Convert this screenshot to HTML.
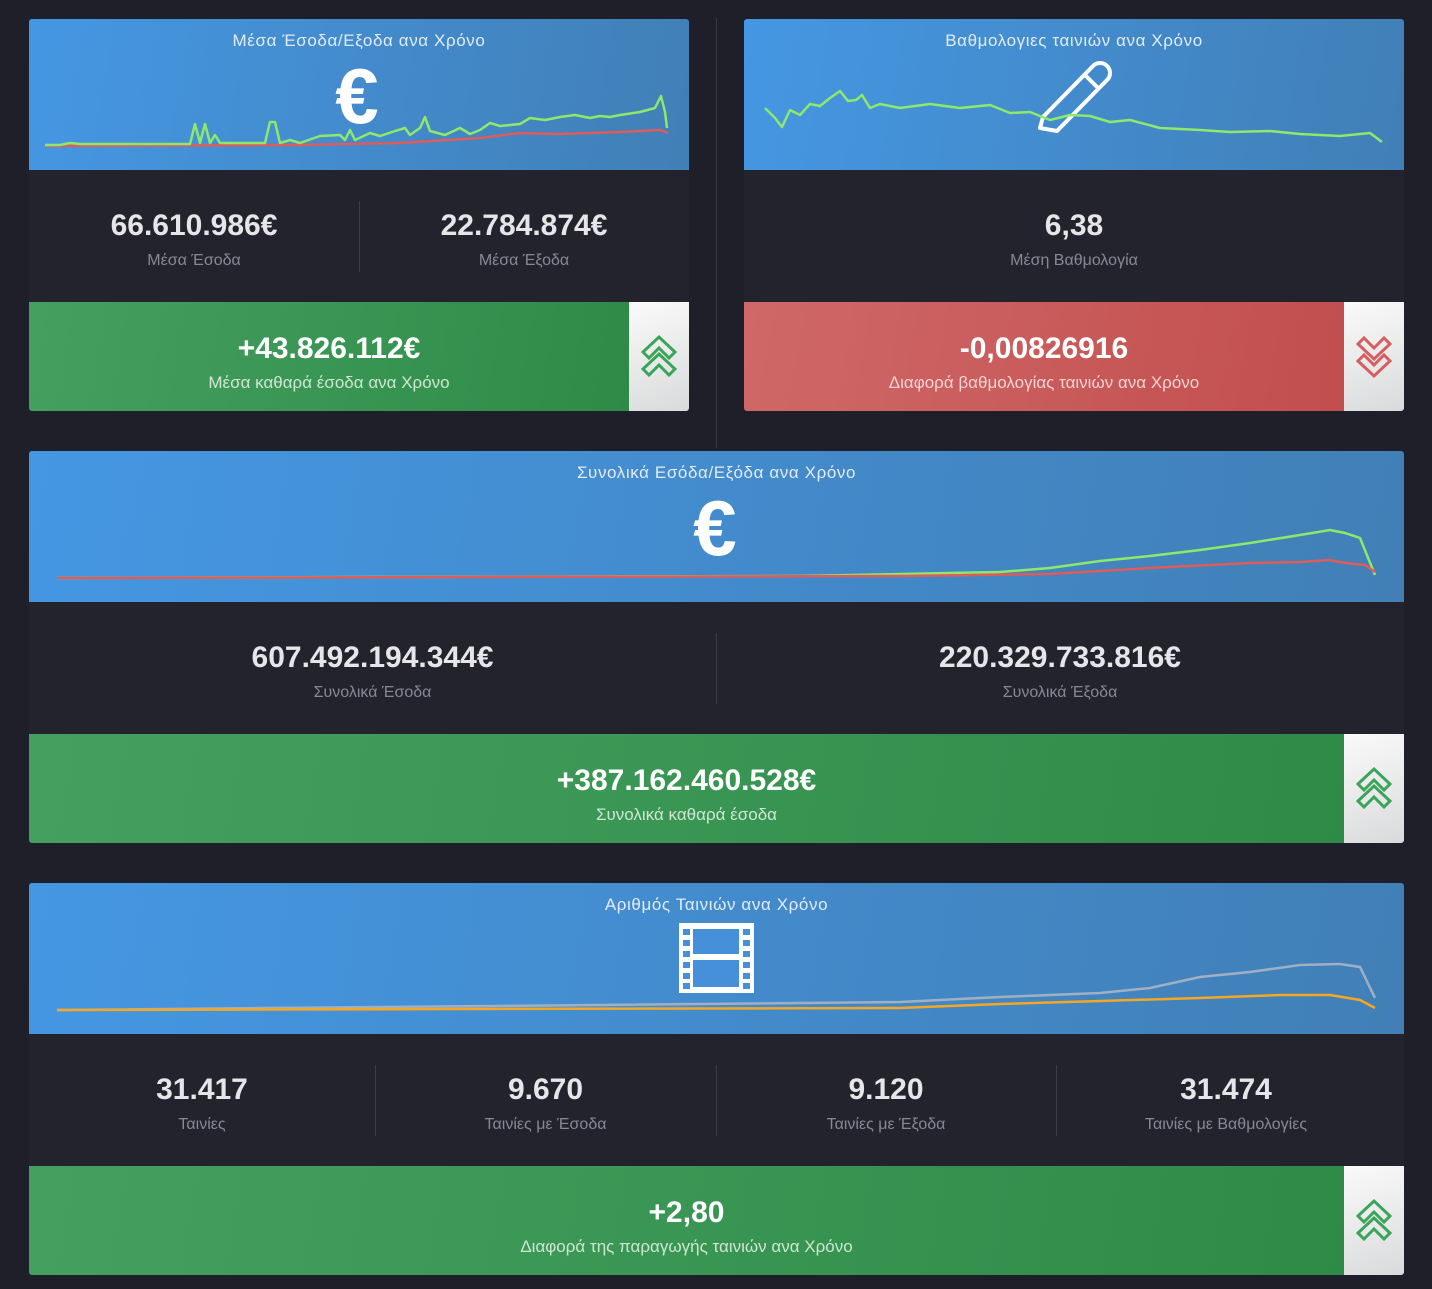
<!DOCTYPE html>
<html><head><meta charset="utf-8"><style>
*{margin:0;padding:0;box-sizing:border-box}
body{width:1432px;height:1289px;background:#1f1f29;font-family:"Liberation Sans","DejaVu Sans",sans-serif;position:relative;overflow:hidden}
.card{position:absolute;border-radius:3px;overflow:hidden;background:#23232e}
.hd{position:absolute;left:0;top:0;right:0;height:151px;background:linear-gradient(100deg,#4597e3,#417fb6)}
.hd .t{position:absolute;left:0;right:0;top:12px;text-align:center;color:#e3ebf5;font-size:17px;letter-spacing:.6px}
.hd svg{position:absolute;left:0;top:0}
.st{position:absolute;top:151px;height:132px;left:0;right:0}
.sc{position:absolute;top:0;height:132px;text-align:center}
.n{position:absolute;left:0;right:0;top:39px;font-size:30px;font-weight:bold;color:#e6e6e8;letter-spacing:0}
.l{position:absolute;left:0;right:0;top:82px;font-size:16px;color:#868995}
.dv{position:absolute;top:31px;width:1px;height:71px;background:#3b3c48}
.bt{position:absolute;top:283px;left:0;height:109px;text-align:center}
.bt .n{top:30px;color:#fff}
.bt .l{top:71px;font-size:17px;color:#cfe6d4}
.g{background:linear-gradient(100deg,#45a05f,#2e8b47)}
.r{background:linear-gradient(100deg,#d06868,#c24e4e)}
.r .l{color:#f3d3d3}
.ib{position:absolute;top:283px;right:0;width:60px;height:109px;background:linear-gradient(160deg,#fafafa,#d9dadb)}
.ib svg{position:absolute;left:12px;top:32px}
</style></head><body>
<div style="position:absolute;left:716px;top:18px;width:1px;height:430px;background:#3a3b46"></div>

<!-- card1 -->
<div class="card" style="left:29px;top:19px;width:660px;height:392px">
 <div class="hd"><div class="t">Μέσα Έσοδα/Εξοδα ανα Χρόνο</div>
 <svg width="660" height="151"><text x="328" y="104" text-anchor="middle" fill="#fff" font-size="78" font-weight="bold" font-family="Liberation Sans">€</text>
 <polyline fill="none" stroke="#de5c5a" stroke-width="2.5" points="16,127 271,126 371,124 451,119 491,114 531,115 591,113 631,111 639,114"/>
 <polyline fill="none" stroke="#8ee86a" stroke-width="2.5" stroke-linejoin="round" points="16,126 31,126 41,124 51,125 161,125 166,105 171,124 176,105 181,124 186,116 191,124 236,124 241,103 246,103 251,124 261,121 271,124 291,117 311,116 316,121 321,111 326,121 341,114 351,117 366,112 376,109 381,116 391,109 396,98 401,112 416,116 431,109 441,115 451,111 461,104 471,107 481,106 491,105 501,99 516,101 531,98 546,96 561,99 571,97 581,98 591,96 611,93 626,89 632,77 636,93 638,109"/></svg></div>
 <div class="st"><div class="sc" style="left:0;width:330px"><div class="n">66.610.986€</div><div class="l">Μέσα Έσοδα</div></div>
 <div class="dv" style="left:330px"></div>
 <div class="sc" style="left:330px;width:330px"><div class="n">22.784.874€</div><div class="l">Μέσα Έξοδα</div></div></div>
 <div class="bt g" style="width:600px"><div class="n">+43.826.112€</div><div class="l">Μέσα καθαρά έσοδα ανα Χρόνο</div></div>
 <div class="ib"><svg width="36" height="46"><g fill="none" stroke="#3aa559" stroke-width="3"><polygon points="2,18 18,3 34,18 28,24 18,14 8,24"/><polygon points="2,35 18,20 34,35 28,41 18,31 8,41"/></g></svg></div>
</div>

<!-- card2 -->
<div class="card" style="left:744px;top:19px;width:660px;height:392px">
 <div class="hd"><div class="t">Βαθμολογιες ταινιών ανα Χρόνο</div>
 <svg width="660" height="151">
 <g fill="none" stroke="#fff" stroke-width="4" stroke-linejoin="round"><path d="M299,98 L350,46 A10,10 0 0 1 364,60 L313,112 L296,109 Z"/><line x1="341" y1="56" x2="354" y2="69"/></g>
 <polyline fill="none" stroke="#8ee86a" stroke-width="2.5" stroke-linejoin="round" points="21,89 31,99 38,108 46,91 56,96 66,85 76,87 86,79 96,72 104,82 112,81 118,76 126,89 136,85 156,89 186,85 216,89 246,86 266,94 286,93 306,101 326,96 346,97 366,103 386,101 416,109 456,111 486,113 526,112 556,115 596,117 626,114 638,123"/></svg></div>
 <div class="st"><div class="sc" style="left:0;width:660px"><div class="n">6,38</div><div class="l">Μέση Βαθμολογία</div></div></div>
 <div class="bt r" style="width:600px"><div class="n">-0,00826916</div><div class="l">Διαφορά βαθμολογίας ταινιών ανα Χρόνο</div></div>
 <div class="ib"><svg width="36" height="46"><g fill="none" stroke="#d65e5e" stroke-width="3"><polygon points="2,10 18,25 34,10 28,4 18,14 8,4"/><polygon points="2,27 18,42 34,27 28,21 18,31 8,21"/></g></svg></div>
</div>

<!-- card3 -->
<div class="card" style="left:29px;top:451px;width:1375px;height:392px">
 <div class="hd"><div class="t">Συνολικά Εσόδα/Εξόδα ανα Χρόνο</div>
 <svg width="1375" height="151"><text x="686" y="104" text-anchor="middle" fill="#fff" font-size="78" font-weight="bold" font-family="Liberation Sans">€</text>
 <polyline fill="none" stroke="#8ee86a" stroke-width="2.5" points="28,127 371,126 771,125 871,123 971,121 1021,117 1071,110 1121,105 1171,99 1221,92 1271,84 1301,79 1316,82 1331,87 1346,124"/>
 <polyline fill="none" stroke="#de5c5a" stroke-width="2.5" points="28,127 871,125 1021,123 1121,117 1221,112 1271,111 1301,109 1316,112 1336,114 1346,121"/></svg></div>
 <div class="st"><div class="sc" style="left:0;width:687px"><div class="n">607.492.194.344€</div><div class="l">Συνολικά Έσοδα</div></div>
 <div class="dv" style="left:687px"></div>
 <div class="sc" style="left:687px;width:688px"><div class="n">220.329.733.816€</div><div class="l">Συνολικά Έξοδα</div></div></div>
 <div class="bt g" style="width:1315px"><div class="n">+387.162.460.528€</div><div class="l">Συνολικά καθαρά έσοδα</div></div>
 <div class="ib"><svg width="36" height="46"><g fill="none" stroke="#3aa559" stroke-width="3"><polygon points="2,18 18,3 34,18 28,24 18,14 8,24"/><polygon points="2,35 18,20 34,35 28,41 18,31 8,41"/></g></svg></div>
</div>

<!-- card4 -->
<div class="card" style="left:29px;top:883px;width:1375px;height:392px">
 <div class="hd"><div class="t">Αριθμός Ταινιών ανα Χρόνο</div>
 <svg width="1375" height="151">
 <polyline fill="none" stroke="#9fb0c2" stroke-width="2.5" points="28,127 571,122 871,119 971,114 1071,110 1121,105 1171,94 1221,89 1271,82 1311,81 1331,84 1346,115"/>
 <polyline fill="none" stroke="#f5a623" stroke-width="2.5" points="28,127 871,125 971,121 1071,118 1171,115 1251,112 1301,112 1331,117 1346,125"/>
 <g fill="#fff"><rect x="650" y="40" width="75" height="70"/></g>
 <g fill="#4590d8"><rect x="664" y="46" width="46" height="25"/><rect x="664" y="77" width="46" height="27"/>
 <rect x="654" y="46" width="7" height="6"/><rect x="654" y="57" width="7" height="6"/><rect x="654" y="68" width="7" height="6"/><rect x="654" y="79" width="7" height="6"/><rect x="654" y="90" width="7" height="6"/><rect x="654" y="100" width="7" height="6"/>
 <rect x="714" y="46" width="7" height="6"/><rect x="714" y="57" width="7" height="6"/><rect x="714" y="68" width="7" height="6"/><rect x="714" y="79" width="7" height="6"/><rect x="714" y="90" width="7" height="6"/><rect x="714" y="100" width="7" height="6"/></g>
 </svg></div>
 <div class="st">
 <div class="sc" style="left:0;width:346px"><div class="n">31.417</div><div class="l">Ταινίες</div></div>
 <div class="dv" style="left:346px"></div>
 <div class="sc" style="left:346px;width:341px"><div class="n">9.670</div><div class="l">Ταινίες με Έσοδα</div></div>
 <div class="dv" style="left:687px"></div>
 <div class="sc" style="left:687px;width:340px"><div class="n">9.120</div><div class="l">Ταινίες με Έξοδα</div></div>
 <div class="dv" style="left:1027px"></div>
 <div class="sc" style="left:1027px;width:340px"><div class="n">31.474</div><div class="l">Ταινίες με Βαθμολογίες</div></div></div>
 <div class="bt g" style="width:1315px"><div class="n">+2,80</div><div class="l">Διαφορά της παραγωγής ταινιών ανα Χρόνο</div></div>
 <div class="ib"><svg width="36" height="46"><g fill="none" stroke="#3aa559" stroke-width="3"><polygon points="2,18 18,3 34,18 28,24 18,14 8,24"/><polygon points="2,35 18,20 34,35 28,41 18,31 8,41"/></g></svg></div>
</div>
</body></html>
